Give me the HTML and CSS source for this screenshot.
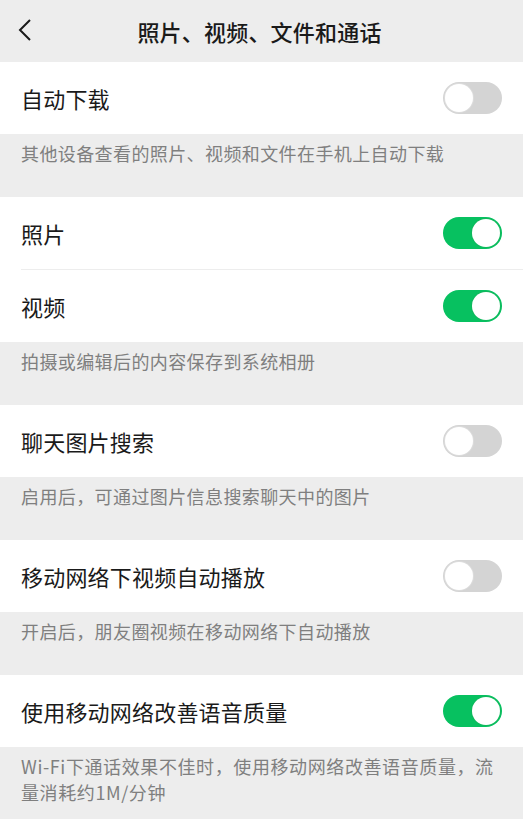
FILE: index.html
```html
<!DOCTYPE html>
<html lang="zh-CN">
<head>
<meta charset="utf-8">
<link rel="stylesheet" href="styles.css">
</head>
<body>
<div class="page">
  <header class="nav">
    <span class="back">
      <svg width="16" height="24" viewBox="0 0 16 24"><path d="M13 2 L3 12 L13 22" fill="none" stroke="#1a1a1a" stroke-width="2" stroke-linejoin="miter"/></svg>
    </span>
    <h1 class="title">照片、视频、文件和通话</h1>
  </header>

  <section class="group">
    <div class="row"><span class="label">自动下载</span><span class="switch"></span></div>
  </section>
  <p class="desc">其他设备查看的照片、视频和文件在手机上自动下载</p>

  <section class="group">
    <div class="row"><span class="label">照片</span><span class="switch on"></span></div>
    <div class="divider"></div>
    <div class="row"><span class="label">视频</span><span class="switch on"></span></div>
  </section>
  <p class="desc">拍摄或编辑后的内容保存到系统相册</p>

  <section class="group">
    <div class="row"><span class="label">聊天图片搜索</span><span class="switch"></span></div>
  </section>
  <p class="desc">启用后，可通过图片信息搜索聊天中的图片</p>

  <section class="group">
    <div class="row"><span class="label">移动网络下视频自动播放</span><span class="switch"></span></div>
  </section>
  <p class="desc">开启后，朋友圈视频在移动网络下自动播放</p>

  <section class="group">
    <div class="row"><span class="label">使用移动网络改善语音质量</span><span class="switch on"></span></div>
  </section>
  <p class="desc last">Wi-Fi下通话效果不佳时，使用移动网络改善语音质量，流量消耗约1M/分钟</p>
</div>
</body>
</html>
```

FILE: styles.css
```css
* { box-sizing: border-box; }
html, body { margin: 0; padding: 0; }
body {
  background: #ededed;
  font-family: "Noto Sans CJK SC", "Noto Sans", sans-serif;
  color: #1a1a1a;
}
.page { width: 523px; min-height: 819px; background: #ededed; }

.nav {
  height: 62px;
  display: flex;
  align-items: center;
  justify-content: center;
  position: relative;
  background: #ededed;
}
.back {
  position: absolute;
  left: 17px;
  top: 18px;
  width: 16px;
  height: 24px;
  display: block;
}
.back svg { display: block; }
.title {
  margin: 0 0 0 -4px;
  font-size: 22px;
  font-weight: 500;
  line-height: 30px;
  letter-spacing: 0.2px;
}

.group { background: #fff; }
.row {
  height: 72px;
  display: flex;
  align-items: center;
  justify-content: space-between;
  padding: 0 21px 0 21px;
}
.divider {
  height: 1px;
  margin-left: 21px;
  background: #ededed;
}
.label {
  font-size: 22px;
  line-height: 30px;
  letter-spacing: 0.2px;
}

.switch {
  width: 59px;
  height: 32px;
  border-radius: 16px;
  background: #d4d4d4;
  position: relative;
  flex: none;
}
.switch::after {
  content: "";
  position: absolute;
  top: 2px; left: 2px;
  width: 28px; height: 28px;
  border-radius: 50%;
  background: #fff;
  box-shadow: 0 0 0 1px #dcdcdc;
}
.switch.on { background: #07c160; }
.switch.on::after { left: auto; right: 2px; box-shadow: 0 0 0 1px #10b85c; }

.desc {
  margin: 0;
  height: 63px;
  padding: 6px 21px 0 21px;
  font-size: 18px;
  line-height: 26px;
  color: #7f7f7f;
  letter-spacing: 0.4px;
}
.desc.last { height: auto; padding-top: 6px; padding-bottom: 20px; line-height: 26px; letter-spacing: 0.6px; }
```
